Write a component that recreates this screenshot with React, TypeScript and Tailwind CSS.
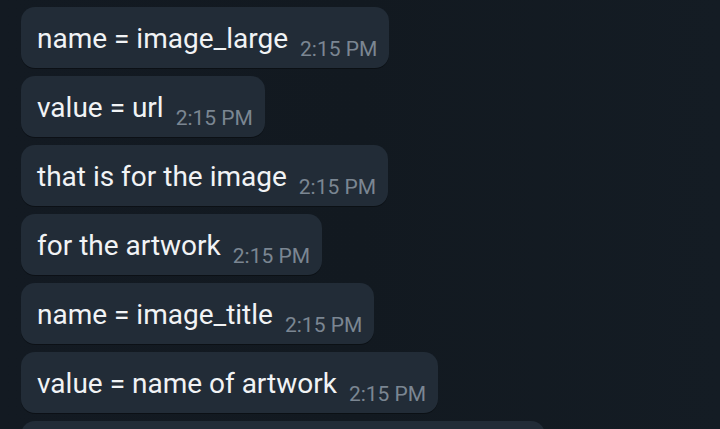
import React from 'react';

interface Message {
  text: string;
  time: string;
}

const messages: Message[] = [
  { text: 'name = image_large', time: '2:15 PM' },
  { text: 'value = url', time: '2:15 PM' },
  { text: 'that is for the image', time: '2:15 PM' },
  { text: 'for the artwork', time: '2:15 PM' },
  { text: 'name = image_title', time: '2:15 PM' },
  { text: 'value = name of artwork', time: '2:15 PM' },
];

const Bubble: React.FC<Message> = ({ text, time }) => (
  <div className="flex items-start self-start h-[61px] shrink-0 pl-4 pr-3 rounded-[14px] bg-[#222c37] shadow-[0_1px_0_rgba(0,0,0,0.35)]">
    <span className="mt-[15px] text-[28px] leading-[34px] text-[#f1f3f5] whitespace-nowrap">
      {text}
    </span>
    <span className="mt-[30px] ml-3 text-[21px] leading-[24px] text-[#7b8692] whitespace-nowrap">
      {time}
    </span>
  </div>
);

export default function App() {
  return (
    <div
      className="w-[720px] h-[429px] overflow-hidden bg-[#121921] bg-gradient-to-r from-[#131a22] via-[#121920] to-[#141c24]"
      style={{ fontFamily: 'Roboto, "Liberation Sans", sans-serif' }}
    >
      <div className="flex flex-col gap-2 pl-[21px] pt-[7px]">
        {messages.map((m, i) => (
          <Bubble key={i} text={m.text} time={m.time} />
        ))}
        {/* next message, scrolled below the fold */}
        <div className="w-[524px] h-[61px] shrink-0 rounded-[14px] bg-[#222c37]" />
      </div>
    </div>
  );
}
